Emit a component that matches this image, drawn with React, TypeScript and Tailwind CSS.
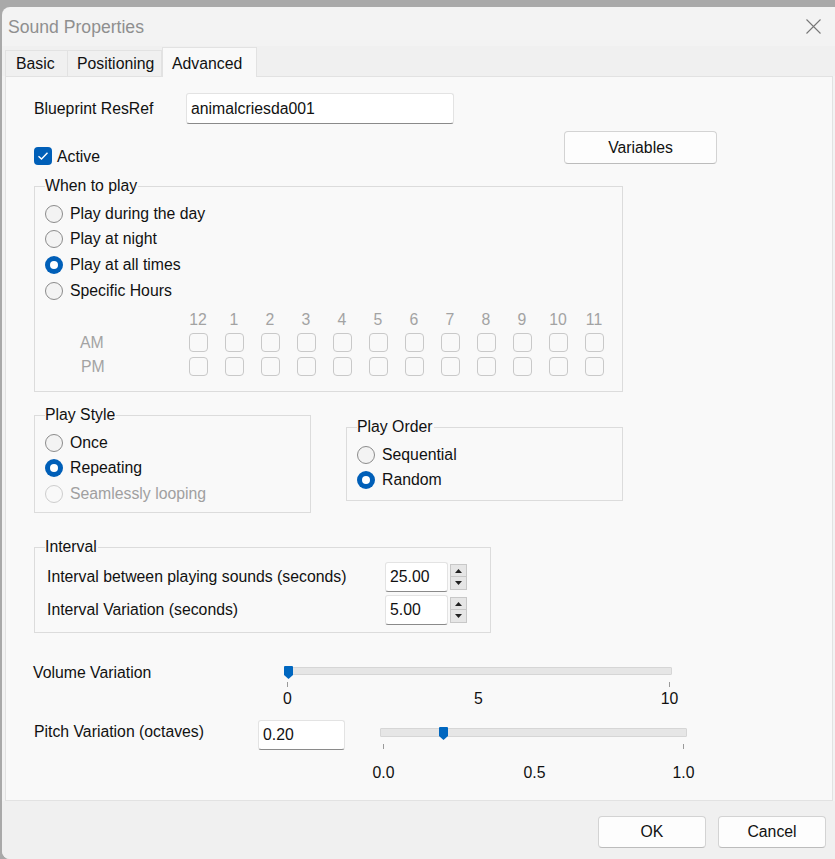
import React from "react";

const FONT = { fontFamily: '"Liberation Sans", Arial, sans-serif' };

function Radio({ label, checked, disabled }: { label: string; checked?: boolean; disabled?: boolean }) {
  return (
    <div className="flex items-center h-[25.6px]">
      {checked ? (
        <div className="w-[18px] h-[18px] rounded-full bg-[#005fb8] flex items-center justify-center shrink-0">
          <div className="w-[8px] h-[8px] rounded-full bg-white" />
        </div>
      ) : (
        <div
          className={
            "w-[18px] h-[18px] rounded-full border shrink-0 " +
            (disabled ? "border-[#cdcdcd] bg-[#f9f9f9]" : "border-[#8b8b8b] bg-[#f3f3f3]")
          }
        />
      )}
      <span className={"ml-[7px] text-[15.8px] leading-[20px] " + (disabled ? "text-[#a0a0a0]" : "text-[#111]")}>{label}</span>
    </div>
  );
}

function Group({ title, className, children }: { title: string; className: string; children: React.ReactNode }) {
  return (
    <div className={"relative border border-[#dcdcdc] " + className}>
      <span className="absolute left-[10px] -top-[11px] bg-[#f9f9f9] pr-[1px] text-[15.8px] leading-[20px] text-[#111]">{title}</span>
      {children}
    </div>
  );
}

function Spinner() {
  return (
    <div className="ml-[2px] flex flex-col w-[17px]">
      <div className="h-[13px] bg-[#e6e6e6] border border-[#c8c8c8] flex items-center justify-center">
        <svg width="7" height="4" viewBox="0 0 7 4"><path d="M0 4 L3.5 0 L7 4 Z" fill="#222" /></svg>
      </div>
      <div className="h-[13px] bg-[#e6e6e6] border border-[#c8c8c8] border-t-0 flex items-center justify-center">
        <svg width="7" height="4" viewBox="0 0 7 4"><path d="M0 0 L3.5 4 L7 0 Z" fill="#222" /></svg>
      </div>
    </div>
  );
}

function Input({ value, className }: { value: string; className: string }) {
  return (
    <div className={"bg-white border border-[#e3e3e3] border-b-[#8a8a8a] rounded-[3px] pl-[4px] flex items-center text-[15.8px] text-[#111] " + className}>
      {value}
    </div>
  );
}

function Slider({
  width,
  trackH,
  thumb,
  ticks,
  tickTop,
  labelTop,
}: {
  width: number;
  trackH: number;
  thumb: number;
  ticks: { x: number; label: string; tick?: boolean }[];
  tickTop: number;
  labelTop: number;
}) {
  return (
    <div className="relative h-[50px]" style={{ width }}>
      <div className="bg-[#e6e6e6] border border-[#d6d6d6] rounded-[1px]" style={{ width, height: trackH }} />
      <svg className="absolute" style={{ left: thumb - 4, top: -1 }} width="9" height="13" viewBox="0 0 9 13">
        <path d="M1 0 H8 Q9 0 9 1 V9 L4.5 13 L0 9 V1 Q0 0 1 0 Z" fill="#0067c0" />
      </svg>
      {ticks.map((t, i) => (
        <React.Fragment key={i}>
          {t.tick !== false && (
            <div className="absolute w-[1px] h-[5px] bg-[#9a9a9a]" style={{ left: t.x, top: tickTop }} />
          )}
          <span
            className="absolute -translate-x-1/2 text-[15.8px] leading-[20px] text-[#111]"
            style={{ left: t.x + 0.5, top: labelTop }}
          >
            {t.label}
          </span>
        </React.Fragment>
      ))}
    </div>
  );
}

const HOURS = ["12", "1", "2", "3", "4", "5", "6", "7", "8", "9", "10", "11"];

function HourBox() {
  return (
    <div className="flex justify-center items-center">
      <div className="w-[19px] h-[19px] rounded-[4px] border border-[#c9c9c9]" />
    </div>
  );
}

export default function App() {
  return (
    <div className="w-[835px] h-[859px] bg-[#a9a9a9] pt-[7px] pl-[2px] overflow-hidden" style={FONT}>
      <div className="w-[833px] h-[852px] bg-[#f3f3f3] rounded-tl-[8px] rounded-bl-[8px] flex flex-col overflow-hidden">
        {/* title bar */}
        <div className="h-[39px] flex items-center justify-between pl-[6px] pr-[14px] shrink-0">
          <span className="text-[17.6px] text-[#8f8f8f] leading-[24px]">Sound Properties</span>
          <svg width="15" height="15" viewBox="0 0 15 15">
            <path d="M0.5 0.5 L14.5 14.5 M14.5 0.5 L0.5 14.5" stroke="#777" strokeWidth="1.1" />
          </svg>
        </div>
        {/* tabs */}
        <div className="h-[30px] flex items-end pl-[3px] shrink-0 bg-[#f0f0f0]">
          <div className="h-[26px] w-[63px] border border-b-0 border-[#e2e2e2] bg-[#f0f0f0] flex items-center pl-[10px] text-[15.8px] text-[#111]">Basic</div>
          <div className="h-[26px] w-[94px] border border-b-0 border-l-0 border-[#e2e2e2] bg-[#f0f0f0] flex items-center pl-[9px] text-[15.8px] text-[#111]">Positioning</div>
          <div className="h-[30px] w-[95px] border border-b-0 border-[#e2e2e2] bg-[#f9f9f9] flex items-start pt-[4px] pl-[9px] text-[15.8px] text-[#111] -mb-[1px] relative z-10">Advanced</div>
        </div>
        {/* page */}
        <div className="h-[725px] ml-[3px] mr-[2px] bg-[#f9f9f9] border border-[#e2e2e2] shrink-0 flex flex-col pl-[28px] text-[#111]">
          {/* blueprint */}
          <div className="flex items-center mt-[16px] h-[31px]">
            <span className="w-[152px] text-[15.8px]">Blueprint ResRef</span>
            <Input value="animalcriesda001" className="w-[268px] h-[31px]" />
          </div>
          {/* active / variables */}
          <div className="flex mt-[7px] h-[34px]">
            <div className="w-[530px] flex items-end">
              <div className="flex items-center h-[18px]">
                <div className="w-[18px] h-[18px] rounded-[4px] bg-[#005fb8] flex items-center justify-center">
                  <svg width="12" height="10" viewBox="0 0 12 10">
                    <path d="M1.5 5.2 L4.5 8 L10.5 1.8" stroke="#fff" strokeWidth="1.4" fill="none" />
                  </svg>
                </div>
                <span className="ml-[5px] text-[15.8px] mt-[2px]">Active</span>
              </div>
            </div>
            <div className="w-[153px] h-[33px] rounded-[4px] border border-[#d3d3d3] border-b-[#bcbcbc] bg-[#fdfdfd] flex items-center justify-center text-[15.8px]">
              Variables
            </div>
          </div>
          {/* when to play */}
          <Group title="When to play" className="mt-[21px] w-[589px] h-[206px]">
            <div className="pl-[10px] pt-[14px]">
              <Radio label="Play during the day" />
              <Radio label="Play at night" />
              <Radio label="Play at all times" checked />
              <Radio label="Specific Hours" />
            </div>
            <div className="grid grid-cols-[145px_repeat(12,36px)] mt-[5px] text-[#a3a3a3] text-[15.8px]">
              <div className="h-[22px]" />
              {HOURS.map((h) => (
                <div key={h} className="h-[22px] flex items-center justify-center">{h}</div>
              ))}
              <div className="h-[24px] flex items-center pl-[45px]">AM</div>
              {HOURS.map((h) => (
                <HourBox key={"a" + h} />
              ))}
              <div className="h-[24px] flex items-center pl-[46px]">PM</div>
              {HOURS.map((h) => (
                <HourBox key={"p" + h} />
              ))}
            </div>
          </Group>
          {/* play style / order */}
          <div className="flex items-start mt-[23px]">
            <Group title="Play Style" className="w-[277px] h-[98px]">
              <div className="pl-[10px] pt-[14px]">
                <Radio label="Once" />
                <Radio label="Repeating" checked />
                <Radio label="Seamlessly looping" disabled />
              </div>
            </Group>
            <Group title="Play Order" className="ml-[35px] mt-[12px] w-[277px] h-[74px]">
              <div className="pl-[10px] pt-[14px]">
                <Radio label="Sequential" />
                <Radio label="Random" checked />
              </div>
            </Group>
          </div>
          {/* interval */}
          <Group title="Interval" className="mt-[34px] w-[457px] h-[86px]">
            <div className="pl-[12px] pt-[14px] flex flex-col gap-[3px]">
              <div className="flex items-center h-[30px]">
                <span className="w-[338px] text-[15.8px]">Interval between playing sounds (seconds)</span>
                <Input value="25.00" className="w-[63px] h-[30px]" />
                <Spinner />
              </div>
              <div className="flex items-center h-[30px]">
                <span className="w-[338px] text-[15.8px]">Interval Variation (seconds)</span>
                <Input value="5.00" className="w-[63px] h-[30px]" />
                <Spinner />
              </div>
            </div>
          </Group>
          {/* volume */}
          <div className="flex mt-[29px] -ml-[1px]">
            <span className="w-[252px] text-[15.8px] leading-[20px] mt-[1px]">Volume Variation</span>
            <div className="mt-[5px]">
              <Slider
                width={387}
                trackH={8}
                thumb={3}
                tickTop={15}
                labelTop={22}
                ticks={[
                  { x: 2, label: "0" },
                  { x: 193, label: "5", tick: false },
                  { x: 384, label: "10" },
                ]}
              />
            </div>
          </div>
          {/* pitch */}
          <div className="flex mt-[3px]">
            <span className="w-[224px] text-[15.8px] leading-[20px] mt-[2px]">Pitch Variation (octaves)</span>
            <Input value="0.20" className="w-[87px] h-[30px]" />
            <div className="ml-[35px] mt-[8px]">
              <Slider
                width={307}
                trackH={9}
                thumb={63}
                tickTop={16}
                labelTop={35}
                ticks={[
                  { x: 3, label: "0.0" },
                  { x: 154, label: "0.5", tick: false },
                  { x: 303, label: "1.0" },
                ]}
              />
            </div>
          </div>
        </div>
        {/* footer */}
        <div className="flex-1 bg-[#f0f0f0] flex justify-end items-start pt-[15px] pr-[9px] gap-[12px]">
          <div className="w-[108px] h-[32px] rounded-[4px] border border-[#d3d3d3] border-b-[#bcbcbc] bg-[#fdfdfd] flex items-center justify-center text-[15.8px] text-[#111]">OK</div>
          <div className="w-[108px] h-[32px] rounded-[4px] border border-[#d3d3d3] border-b-[#bcbcbc] bg-[#fdfdfd] flex items-center justify-center text-[15.8px] text-[#111]">Cancel</div>
        </div>
      </div>
    </div>
  );
}
